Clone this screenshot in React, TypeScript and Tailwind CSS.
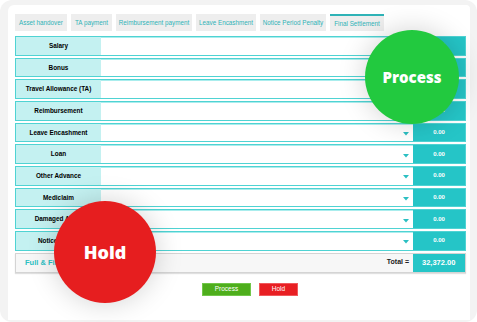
import React from "react"

const tabs = [
    { name: "Asset handover", w: "w-[52px]" },
    { name: "TA payment", w: "w-[41px]" },
    { name: "Reimbursement payment", w: "w-[76px]" },
    { name: "Leave Encashment", w: "w-[60px]" },
    { name: "Notice Period Penalty", w: "w-[66px]" },
    { name: "Final Settlement", w: "w-[54px]", active: true },
]

const rows = [
    "Salary",
    "Bonus",
    "Travel Allowance (TA)",
    "Reimbursement",
    "Leave Encashment",
    "Loan",
    "Other Advance",
    "Mediclaim",
    "Damaged Asset",
    "Notice Period",
]

const Row: React.FC<{ label: string }> = ({ label }) => {
    return (
        <div className="h-[19.67px] flex border border-[#4fd3d3] shadow-[inset_0_0_0_1px_#aaeded]">
            <div className="w-[85px] bg-[#c4f1f1] flex items-center justify-center text-[6.4px] font-bold text-black whitespace-nowrap">
                {label}
            </div>
            <div className="flex-1 bg-white flex items-center justify-end pr-[4px] border-t border-[#aaeded]">
                <svg width="6" height="4" viewBox="0 0 6 4" className="mt-[2px]">
                    <path d="M0 0h6L3 3.5z" fill="#2bbfc2" />
                </svg>
            </div>
            <div className="w-[52px] bg-[#25c5c7] flex items-center justify-center text-[6px] font-bold text-white">
                0.00
            </div>
        </div>
    )
}

export default function App() {
    return (
        <div className="w-[477px] h-[322px] bg-white overflow-hidden relative font-['Liberation_Sans',Arial,sans-serif]">
            <div className="h-full rounded-[12px] bg-[#f3f3f3] pt-[5px] pl-[8px] pr-[7px] pb-[2px]">
                <div className="h-full bg-white rounded-tl-[6px] rounded-tr-[4px] pt-[9px] pl-[7px] pr-[4px]">
                    <div className="flex gap-[4px] h-[17px]">
                        {tabs.map((tab, index) => {
                            return (
                                <div
                                    key={index}
                                    className={`${tab.w} bg-[#eeeeee] flex items-center justify-center text-[6.3px] text-[#2fb3b7] whitespace-nowrap ${tab.active ? "border-t-2 border-[#2fb3b7]" : ""}`}
                                >
                                    {tab.name}
                                </div>
                            )
                        })}
                    </div>
                    <div className="mt-[5px] flex flex-col gap-[2px]">
                        {rows.map((label, index) => (
                            <Row key={index} label={label} />
                        ))}
                        <div className="h-[20px] flex border border-[#d4d4d4] bg-[#f7f7f7] shadow-[0_1px_1px_rgba(0,0,0,0.12)]">
                            <div className="flex-1 flex items-center pl-[9px] text-[7.5px] font-bold text-[#2cc0c3]">
                                Full &amp; Final Settlement
                            </div>
                            <div className="flex items-center pr-[4px] text-[7px] font-bold text-[#222]">Total =</div>
                            <div className="w-[52px] bg-[#25c5c7] flex items-center pl-[9px] text-[7.5px] font-bold text-white overflow-hidden whitespace-nowrap">
                                32,372.00
                            </div>
                        </div>
                    </div>
                    <div className="flex justify-center gap-[8px] mt-[10px] pl-[19px]">
                        <button className="w-[49px] h-[13px] bg-[#4eae1c] border border-[#72c64a] text-white text-[6.5px] flex items-center justify-center">
                            Process
                        </button>
                        <button className="w-[39px] h-[13px] bg-[#e81f23] border border-[#f0595c] text-white text-[6.5px] flex items-center justify-center">
                            Hold
                        </button>
                    </div>
                </div>
            </div>
            <div className="absolute left-[365px] top-[30px] w-[94px] h-[94px] rounded-full bg-[#22c93f] shadow-[0_0_28px_rgba(0,0,0,0.18)] flex items-center justify-center text-white text-[15px] font-extrabold font-['Open_Sans',sans-serif]">
                Process
            </div>
            <div className="absolute left-[54px] top-[201px] w-[102px] h-[102px] rounded-full bg-[#e61e1f] shadow-[0_0_28px_rgba(0,0,0,0.18)] flex items-center justify-center text-white text-[18px] font-extrabold font-['Open_Sans',sans-serif]">
                Hold
            </div>
        </div>
    )
}
